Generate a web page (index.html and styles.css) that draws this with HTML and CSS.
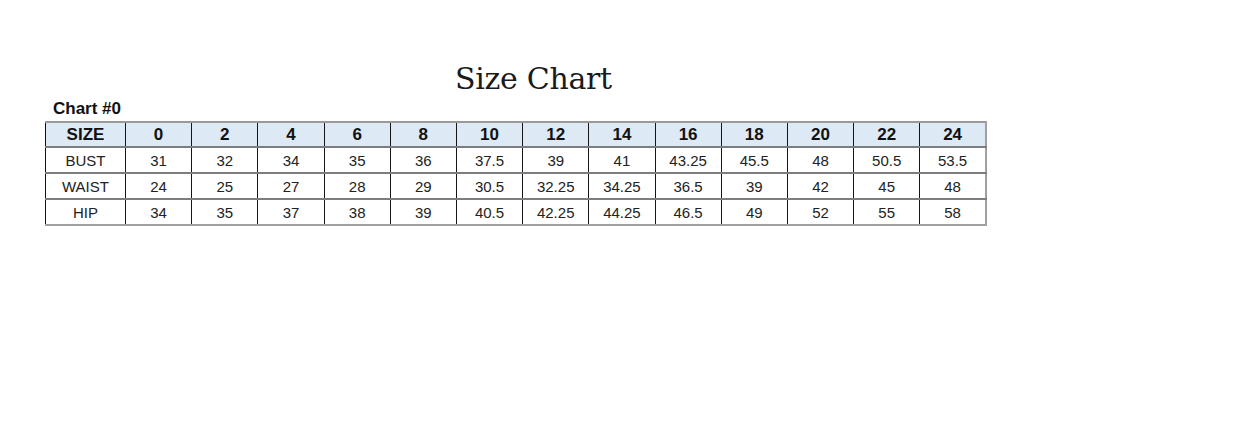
FILE: index.html
```html
<!DOCTYPE html>
<html>
<head>
<meta charset="utf-8">
<link rel="stylesheet" href="styles.css">
</head>
<body>
<div class="page">
  <h1 class="title">Size Chart</h1>
  <div class="label">Chart #0</div>
  <table class="chart">
    <thead>
      <tr><th class="first">SIZE</th><th>0</th><th>2</th><th>4</th><th>6</th><th>8</th><th>10</th><th>12</th><th>14</th><th>16</th><th>18</th><th>20</th><th>22</th><th>24</th></tr>
    </thead>
    <tbody>
      <tr><td class="first">BUST</td><td>31</td><td>32</td><td>34</td><td>35</td><td>36</td><td>37.5</td><td>39</td><td>41</td><td>43.25</td><td>45.5</td><td>48</td><td>50.5</td><td>53.5</td></tr>
      <tr><td class="first">WAIST</td><td>24</td><td>25</td><td>27</td><td>28</td><td>29</td><td>30.5</td><td>32.25</td><td>34.25</td><td>36.5</td><td>39</td><td>42</td><td>45</td><td>48</td></tr>
      <tr><td class="first">HIP</td><td>34</td><td>35</td><td>37</td><td>38</td><td>39</td><td>40.5</td><td>42.25</td><td>44.25</td><td>46.5</td><td>49</td><td>52</td><td>55</td><td>58</td></tr>
    </tbody>
  </table>
</div>
</body>
</html>
```
FILE: styles.css
```css
html, body {
  margin: 0;
  padding: 0;
  background: #ffffff;
}
.page {
  padding: 64px 0 0 45px;
  font-family: "Liberation Sans", Arial, sans-serif;
  color: #111;
}
.title {
  margin: 0 0 0 410px;
  font-family: "DejaVu Serif", serif;
  font-weight: normal;
  font-size: 30px;
  line-height: 30px;
  color: #1a1a1a;
  letter-spacing: -0.3px;
}
.label {
  margin: 5px 0 0 8px;
  font-weight: bold;
  font-size: 17px;
  line-height: 20px;
  padding-bottom: 2px;
  color: #111;
}
.chart {
  border-collapse: collapse;
  table-layout: fixed;
  width: 942px;
  border-top: 2px solid #9a9a9a;
  border-right: 2px solid #a0a0a0;
  border-bottom: 2px solid #a0a0a0;
  border-left: 1px solid #111;
}
.chart th, .chart td {
  padding: 0;
  text-align: center;
  border-left: 1px solid #151515;
  border-right: 1px solid #151515;
  border-top: 2px solid #7d7d7d;
  border-bottom: 2px solid #7d7d7d;
}
.chart .first {
  width: 79px;
  border-left: 1px solid #111;
}
.chart th {
  background: #dde9f5;
  font-weight: bold;
  font-size: 17px;
  height: 23px;
  color: #111;
}
.chart td {
  font-size: 15px;
  height: 24px;
  color: #222;
}
.chart thead th {
  border-top: 2px solid #9a9a9a;
}
.chart tbody tr:last-child td {
  border-bottom: 2px solid #a0a0a0;
}
.chart tr > :last-child {
  border-right: 2px solid #a0a0a0;
}
```
